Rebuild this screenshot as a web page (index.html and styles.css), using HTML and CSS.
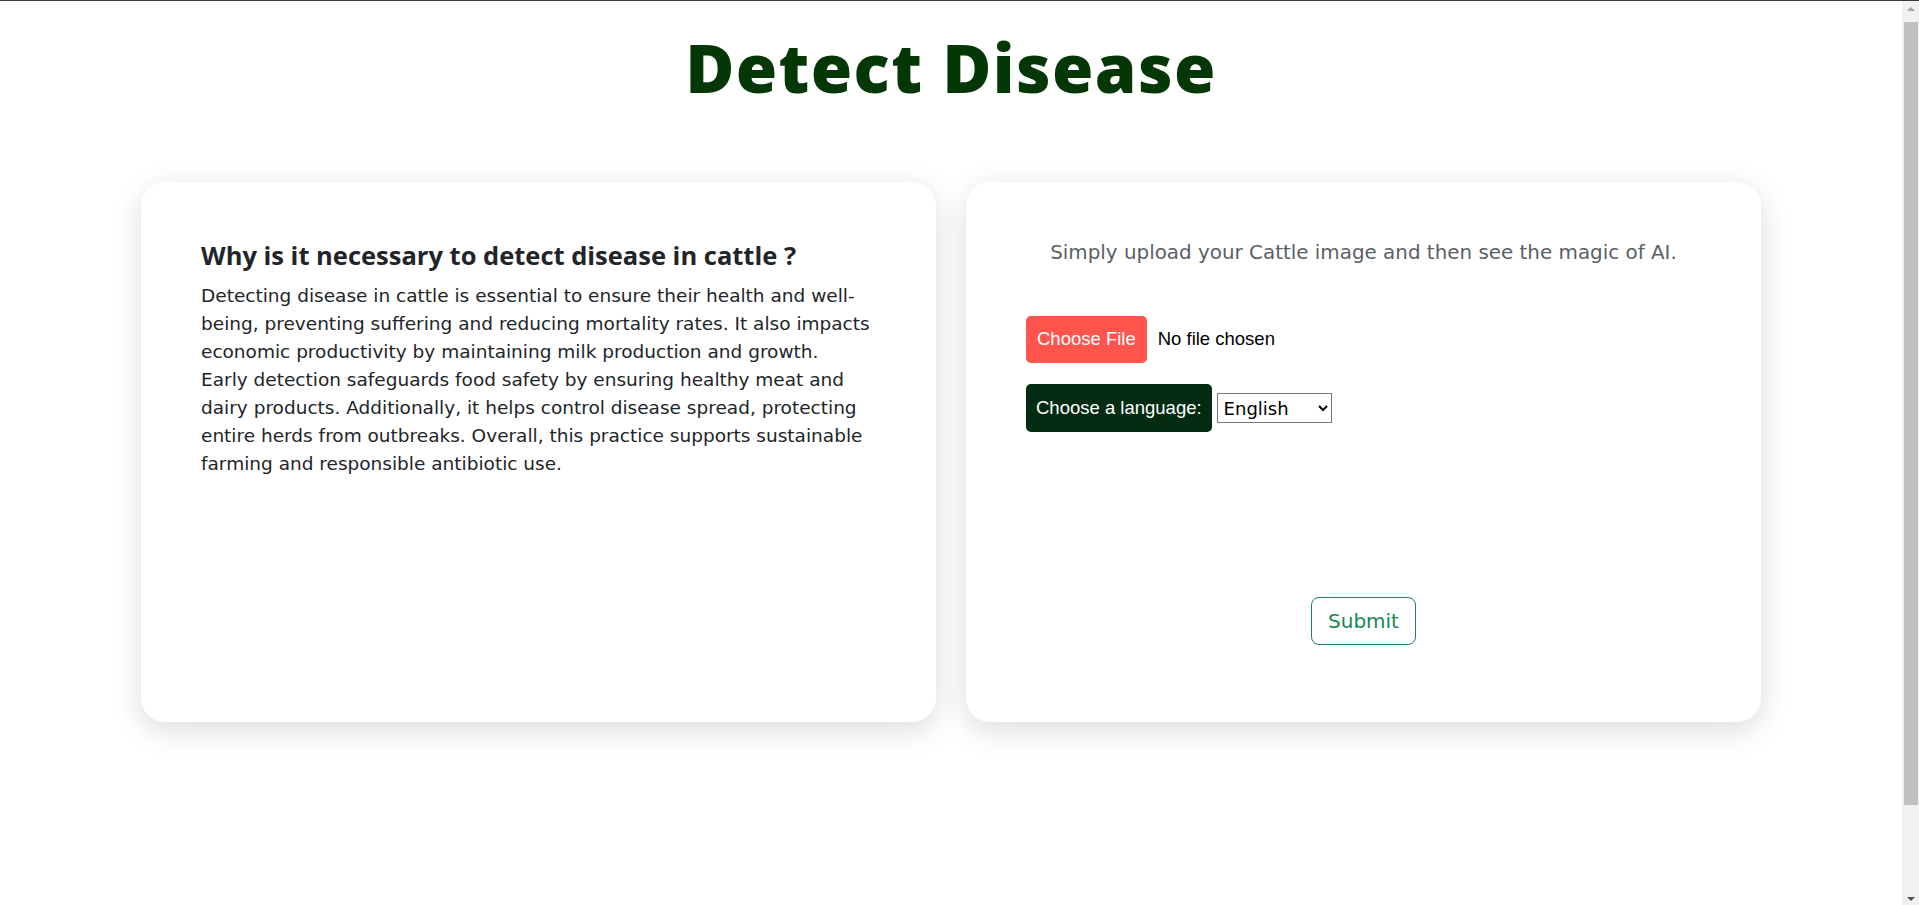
FILE: index.html
```html
<!DOCTYPE html>
<html lang="en">
<head>
<meta charset="utf-8">
<title>Detect Disease</title>
<link rel="stylesheet" href="styles.css">
</head>
<body>
<header class="page-header">
  <h1 class="page-title">Detect Disease</h1>
</header>
<main class="cards">
  <section class="card card-info">
    <h2 class="info-title">Why is it necessary to detect disease in cattle ?</h2>
    <p class="info-text">Detecting disease in cattle is essential to ensure their health and well-being, preventing suffering and reducing mortality rates. It also impacts economic productivity by maintaining milk production and growth.<br>Early detection safeguards food safety by ensuring healthy meat and dairy products. Additionally, it helps control disease spread, protecting entire herds from outbreaks. Overall, this practice supports sustainable farming and responsible antibiotic use.</p>
  </section>
  <section class="card card-upload">
    <p class="upload-hint">Simply upload your Cattle image and then see the magic of AI.</p>
    <form class="upload-form">
      <div class="form-row">
        <input type="file" class="file-input" accept="image/*">
      </div>
      <div class="form-row">
        <label class="lang-label" for="lang">Choose a language:</label>
        <select id="lang" class="lang-select">
          <option>English</option>
          <option>Hindi</option>
          <option>Marathi</option>
        </select>
      </div>
      <div class="submit-row">
        <button type="submit" class="btn-submit">Submit</button>
      </div>
    </form>
  </section>
</main>
<div class="scrollbar" aria-hidden="true">
  <span class="sb-arrow sb-up"></span>
  <span class="sb-thumb"></span>
  <span class="sb-arrow sb-down"></span>
</div>
</body>
</html>
```

FILE: styles.css
```css
* { box-sizing: border-box; }

body {
  margin: 0;
  min-height: 1000px;
  padding-right: 17px;
  border-top: 1px solid #3c3c3c;
  background: #ffffff;
  font-family: "DejaVu Sans", "Open Sans", sans-serif;
  color: #212529;
}

.page-header {
  display: flex;
  justify-content: center;
}

.page-title {
  margin: 26px 0 0;
  font-family: "Open Sans", "DejaVu Sans", sans-serif;
  font-size: 67px;
  line-height: 80px;
  font-weight: 800;
  letter-spacing: 1.4px;
  color: #033806;
}

.cards {
  display: flex;
  justify-content: center;
  gap: 30px;
  margin-top: 75px;
}

.card {
  width: 795px;
  height: 540px;
  padding: 58px 60px 60px;
  background: #ffffff;
  border-radius: 24px;
  box-shadow: 0 8px 30px rgba(0, 0, 0, 0.14);
}

.card-info {
  padding-right: 45px;
}

.info-title {
  margin: 0 0 11px;
  font-family: "Open Sans", "DejaVu Sans", sans-serif;
  font-size: 25.5px;
  line-height: 31px;
  font-weight: 700;
  color: #212529;
}

.info-text {
  margin: 0;
  font-size: 18.5px;
  line-height: 28px;
  color: #212529;
}

.upload-hint {
  margin: 0 0 50px;
  text-align: center;
  font-size: 19.9px;
  line-height: 26px;
  color: #5a5f66;
}

.upload-form {
  display: flex;
  flex-direction: column;
}

.form-row {
  display: flex;
  align-items: center;
  gap: 5px;
  margin-bottom: 21px;
}

.file-input {
  font-family: "Liberation Sans", Arial, sans-serif;
  font-size: 18.5px;
  color: #000;
}

.file-input::file-selector-button {
  margin-right: 11px;
  padding: 11px 11px 12px;
  border: none;
  border-radius: 5px;
  background: #ff554d;
  color: #ffffff;
  font-family: "Liberation Sans", Arial, sans-serif;
  font-size: 18.5px;
  line-height: 24px;
}

.lang-label {
  padding: 12px 10px;
  border-radius: 5px;
  background: #032b12;
  color: #ffffff;
  font-family: "Liberation Sans", Arial, sans-serif;
  font-size: 18.5px;
  line-height: 24px;
}

.lang-select {
  width: 115px;
  height: 30px;
  padding: 0 2px;
  border: 1px solid #767676;
  border-radius: 0;
  background: #ffffff;
  color: #000;
  font-family: inherit;
  font-size: 18px;
}

.submit-row {
  display: flex;
  justify-content: center;
  margin-top: 144px;
}

.btn-submit {
  padding: 8px 16px;
  border: 1px solid #198754;
  border-radius: 8px;
  background: transparent;
  color: #198754;
  font-family: inherit;
  font-size: 20px;
  line-height: 30px;
}

/* window scrollbar as seen in the capture */
.scrollbar {
  position: fixed;
  top: 1px;
  right: 0;
  bottom: 0;
  width: 17px;
  display: flex;
  flex-direction: column;
  align-items: center;
  background: #f1f1f1;
}

.sb-arrow {
  width: 0;
  height: 0;
  border-left: 4px solid transparent;
  border-right: 4px solid transparent;
}

.sb-up {
  margin-top: 6px;
  border-bottom: 4px solid #a3a3a3;
}

.sb-thumb {
  width: 14px;
  height: 783px;
  margin-top: 11px;
  margin-left: 1px;
  background: #c1c1c1;
}

.sb-down {
  margin-top: auto;
  margin-bottom: 4px;
  border-top: 4px solid #505050;
}
```
